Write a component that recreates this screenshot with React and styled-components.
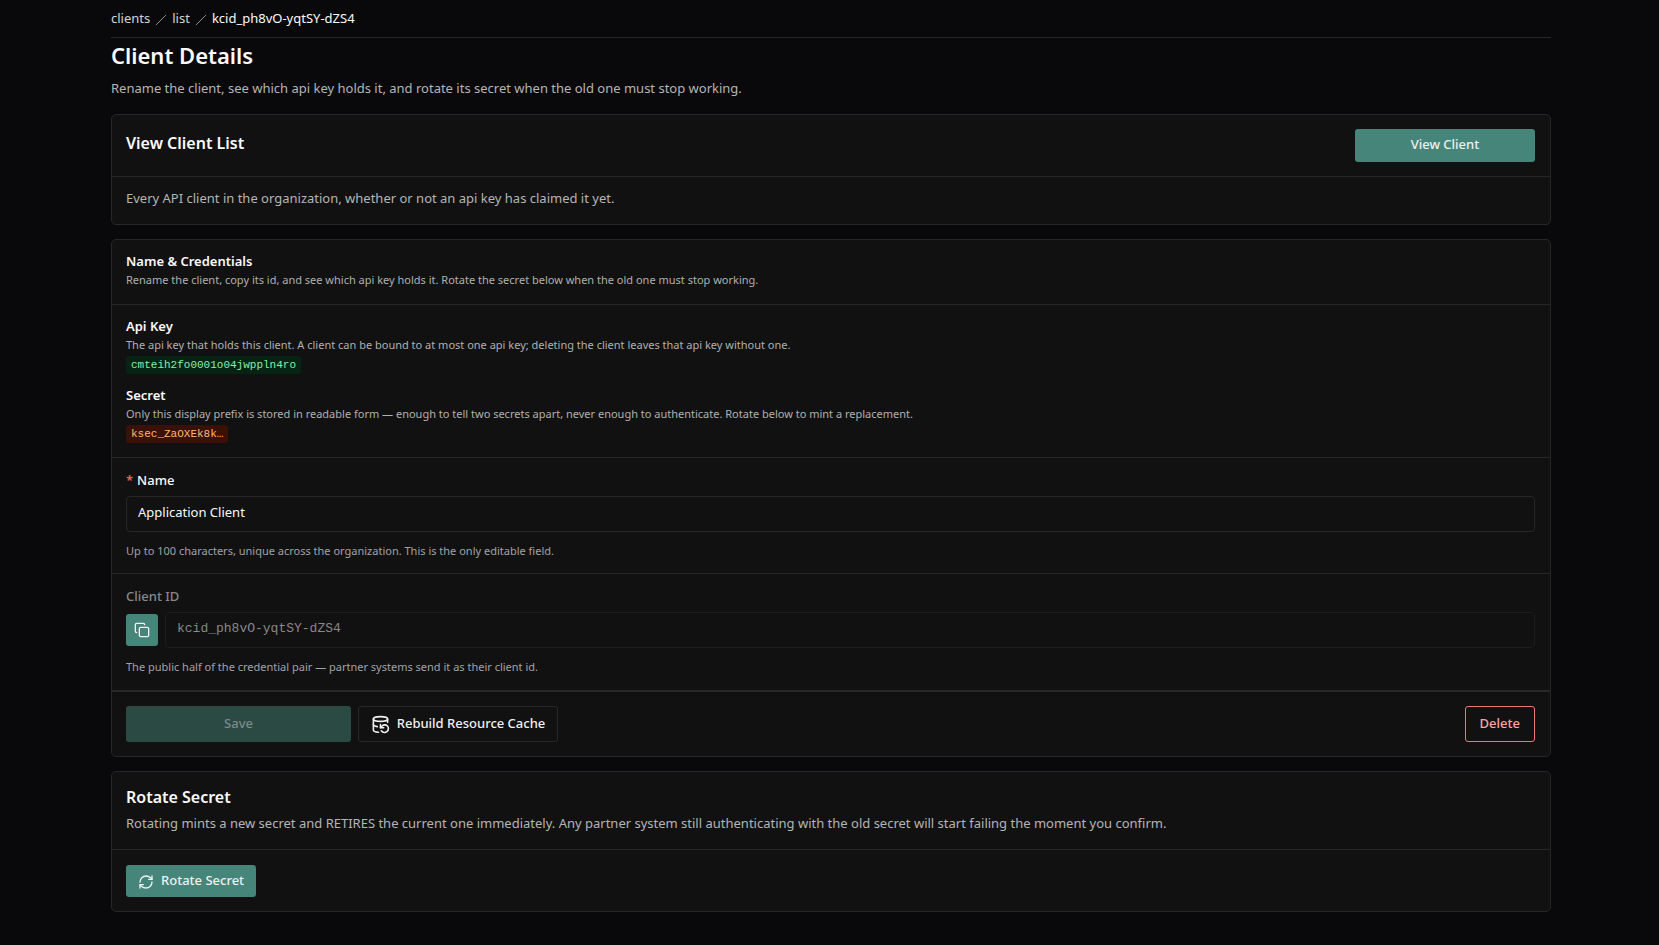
import React, { useState } from "react";
import styled, { createGlobalStyle, css } from "styled-components";
import { Copy, DatabaseBackup, RefreshCw } from "lucide-react";

const GlobalStyle = createGlobalStyle`
  *, *::before, *::after { box-sizing: border-box; }
  body {
    margin: 0;
    background: #09090b;
    color: #fafafa;
    font: 400 13px/20px "Noto Sans", sans-serif;
  }
  h1, h2, h3, p, ol { margin: 0; padding: 0; }
  button, input { font: inherit; }
`;

const Page = styled.main`
  display: flex;
  flex-direction: column;
  width: 100%;
  max-width: 1443px;
  min-height: 100vh;
  margin: 0 auto;
  padding: 0 0 32px 3px;
`;

const Breadcrumbs = styled.nav`
  padding: 8px 0 9px;
  border-bottom: 1px solid #27272a;
`;

const Crumbs = styled.ol`
  display: flex;
  align-items: center;
  gap: 5px;
  list-style: none;
`;

const Crumb = styled.li`
  display: flex;
  align-items: center;
  gap: 5px;
`;

const CrumbLink = styled.a`
  color: #d4d4d4;
  text-decoration: none;
`;

const Slash = styled.svg`
  width: 12px;
  height: 12px;
  margin-top: 4px;
  stroke: #8a8a8a;
`;

const PageHeader = styled.header`
  display: flex;
  flex-direction: column;
  gap: 9px;
  padding: 3px 0 16px;
`;

const PageTitle = styled.h1`
  font-size: 22px;
  font-weight: 600;
  line-height: 28px;
`;

const Lead = styled.p`
  color: #b5b5b5;
`;

const Stack = styled.div`
  display: flex;
  flex-direction: column;
  gap: 14px;
`;

const Card = styled.section`
  border: 1px solid #27272a;
  border-radius: 5px;
  background: #111111;
`;

const Section = styled.div`
  padding: ${(p) => p.$top || "14px"} 15px ${(p) => p.$bottom || "14px"} 14px;
  &:not(:first-child) {
    border-top: ${(p) => (p.$footer ? "2px" : "1px")} solid #27272a;
  }
`;

const Row = styled.div`
  display: flex;
  align-items: flex-start;
  justify-content: ${(p) => (p.$spread ? "space-between" : "flex-start")};
  gap: 7px;
`;

const CardTitle = styled.h2`
  font-size: 16px;
  font-weight: 600;
  line-height: 28px;
  & + p { margin-top: 2px; }
`;

const GroupTitle = styled.h3`
  font-size: 13px;
  font-weight: 600;
  line-height: 20px;
`;

const Note = styled.p`
  color: #b0b0b0;
  font-size: 11px;
  line-height: 18px;
`;

const Hint = styled(Note)`
  color: #a1a1aa;
  margin-top: 10px;
`;

const tones = {
  green: css`
    background: #052414;
    color: #86efac;
  `,
  orange: css`
    background: #3b1006;
    color: #fdba74;
  `,
};

const Code = styled.code`
  display: block;
  width: fit-content;
  margin-top: 2px;
  padding: 0 5px;
  border-radius: 3px;
  font: 400 11px/18px "Liberation Mono", monospace;
  ${(p) => tones[p.$tone]}
`;

const Facts = styled.div`
  display: flex;
  flex-direction: column;
  gap: 11px;
`;

const Label = styled.label`
  display: block;
  margin-bottom: 6px;
  font-weight: 500;
  color: ${(p) => (p.$muted ? "#888888" : "#fafafa")};
`;

const Required = styled.span`
  margin-right: 4px;
  color: #f4615c;
  font-weight: 600;
`;

const TextInput = styled.input`
  flex: 1;
  display: block;
  width: 100%;
  min-width: 0;
  height: 36px;
  padding: 0 11px 4px;
  border: 1px solid #27272a;
  border-radius: 4px;
  background: transparent;
  color: #fafafa;
  outline: none;
  &:disabled {
    padding-bottom: 3px;
    border-color: #1c1c1d;
    color: #888888;
    font-family: "Liberation Mono", monospace;
  }
`;

const Button = styled.button`
  display: inline-flex;
  align-items: center;
  justify-content: center;
  gap: 7px;
  width: ${(p) => p.$width || "auto"};
  height: ${(p) => p.$height || "36px"};
  padding: 0 ${(p) => p.$side || "14px"} 3px;
  border: 1px solid transparent;
  border-radius: 3px;
  background: transparent;
  color: #f0f0f0;
  font-weight: 500;
  white-space: nowrap;
  cursor: pointer;
  & > svg { flex: none; position: relative; top: 2px; }
`;

const PrimaryButton = styled(Button)`
  border: 0;
  background: #45857a;
  &:disabled {
    background: #2b4a44;
    color: #7d8b88;
    cursor: default;
  }
`;

const OutlineButton = styled(Button)`
  border-color: #27272a;
`;

const DangerButton = styled(Button)`
  margin-left: auto;
  border-color: #f87171;
  color: #fca5a5;
`;

const IconButton = styled.button`
  display: grid;
  place-items: center;
  width: 32px;
  height: 32px;
  margin-top: 2px;
  padding: 0;
  border: 0;
  border-radius: 3px;
  background: #45857a;
  color: #f0f0f0;
  cursor: pointer;
`;

const CrumbSlash = () => (
  <Slash viewBox="0 0 12 12" fill="none" aria-hidden="true">
    <path d="M1 11L11 1" />
  </Slash>
);

export default function App() {
  const [name, setName] = useState("Application Client");
  return (
    <>
      <GlobalStyle />
      <Page>
        <Breadcrumbs aria-label="Breadcrumb">
          <Crumbs>
            <Crumb><CrumbLink href="#clients">clients</CrumbLink><CrumbSlash /></Crumb>
            <Crumb><CrumbLink href="#list">list</CrumbLink><CrumbSlash /></Crumb>
            <Crumb aria-current="page">kcid_ph8vO-yqtSY-dZS4</Crumb>
          </Crumbs>
        </Breadcrumbs>
        <PageHeader>
          <PageTitle>Client Details</PageTitle>
          <Lead>
            Rename the client, see which api key holds it, and rotate its secret when the old one must stop working.
          </Lead>
        </PageHeader>
        <Stack>
          <Card>
            <Section>
              <Row $spread>
                <CardTitle>View Client List</CardTitle>
                <PrimaryButton type="button" $width="180px" $height="33px">View Client</PrimaryButton>
              </Row>
            </Section>
            <Section $top="11px" $bottom="16px">
              <Lead>Every API client in the organization, whether or not an api key has claimed it yet.</Lead>
            </Section>
          </Card>

          <Card>
            <Section $top="11px" $bottom="15px">
              <GroupTitle>Name &amp; Credentials</GroupTitle>
              <Note>
                Rename the client, copy its id, and see which api key holds it. Rotate the secret below when the old one
                must stop working.
              </Note>
            </Section>
            <Section $top="11px">
              <Facts>
                <div>
                  <GroupTitle>Api Key</GroupTitle>
                  <Note>
                    The api key that holds this client. A client can be bound to at most one api key; deleting the
                    client leaves that api key without one.
                  </Note>
                  <Code $tone="green">cmteih2fo0001o04jwppln4ro</Code>
                </div>
                <div>
                  <GroupTitle>Secret</GroupTitle>
                  <Note>
                    Only this display prefix is stored in readable form — enough to tell two secrets apart, never enough
                    to authenticate. Rotate below to mint a replacement.
                  </Note>
                  <Code $tone="orange">ksec_ZaOXEk8k…</Code>
                </div>
              </Facts>
            </Section>
            <Section $top="12px" $bottom="13px">
              <Label htmlFor="client-name"><Required aria-hidden="true">*</Required>Name</Label>
              <TextInput id="client-name" required value={name} onChange={(e) => setName(e.target.value)} />
              <Hint>Up to 100 characters, unique across the organization. This is the only editable field.</Hint>
            </Section>
            <Section $top="12px">
              <Label $muted htmlFor="client-id">Client ID</Label>
              <Row>
                <IconButton type="button" aria-label="Copy client ID"><Copy size={16} /></IconButton>
                <TextInput id="client-id" disabled value="kcid_ph8vO-yqtSY-dZS4" readOnly />
              </Row>
              <Hint>The public half of the credential pair — partner systems send it as their client id.</Hint>
            </Section>
            <Section $footer>
              <Row>
                <PrimaryButton type="submit" disabled $width="225px">Save</PrimaryButton>
                <OutlineButton type="button" $width="200px" $side="12px">
                  <DatabaseBackup size={19} />Rebuild Resource Cache
                </OutlineButton>
                <DangerButton type="button">Delete</DangerButton>
              </Row>
            </Section>
          </Card>

          <Card>
            <Section $top="11px" $bottom="16px">
              <CardTitle>Rotate Secret</CardTitle>
              <Lead>
                Rotating mints a new secret and RETIRES the current one immediately. Any partner system still
                authenticating with the old secret will start failing the moment you confirm.
              </Lead>
            </Section>
            <Section $top="15px">
              <PrimaryButton type="button" $height="32px" $side="12px">
                <RefreshCw size={16} />Rotate Secret
              </PrimaryButton>
            </Section>
          </Card>
        </Stack>
      </Page>
    </>
  );
}
